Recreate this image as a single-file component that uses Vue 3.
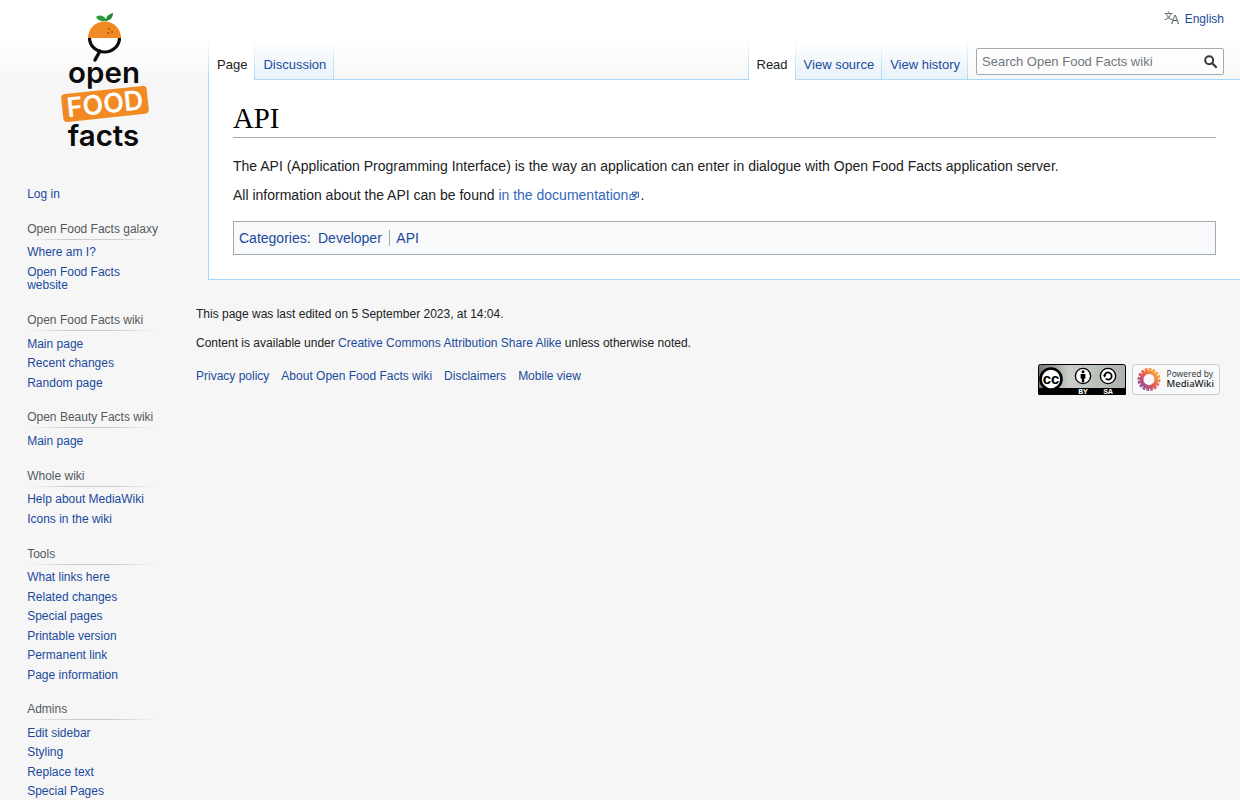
<script setup>
const portals = [
  { title: 'Open Food Facts galaxy', links: ['Where am I?', 'Open Food Facts website'] },
  { title: 'Open Food Facts wiki', links: ['Main page', 'Recent changes', 'Random page'] },
  { title: 'Open Beauty Facts wiki', links: ['Main page'] },
  { title: 'Whole wiki', links: ['Help about MediaWiki', 'Icons in the wiki'] },
  { title: 'Tools', links: ['What links here', 'Related changes', 'Special pages', 'Printable version', 'Permanent link', 'Page information'] },
  { title: 'Admins', links: ['Edit sidebar', 'Styling', 'Replace text', 'Special Pages'] }
]
const footerLinks = ['Privacy policy', 'About Open Food Facts wiki', 'Disclaimers', 'Mobile view']
</script>

<template>
  <div class="page">
    <aside class="sidebar">
      <a class="logo">
        <svg width="130" height="160" viewBox="0 0 130 160">
          <path d="M56 17 C60 14 65 16 67 21 C62 22 58 21 56 17Z" fill="#2f9a3e" />
          <path d="M66 21 C66 16 69 14 73 13 C73 17 71 20 66 21Z" fill="#1f8a35" />
          <path d="M48 38 A16.5 16.5 0 0 1 81 38Z" fill="#f28a24" />
          <circle cx="69" cy="29" r="0.8" fill="#5b3413" />
          <circle cx="72" cy="32" r="0.8" fill="#5b3413" />
          <circle cx="68" cy="33" r="0.8" fill="#5b3413" />
          <path d="M49.5 38 A15 14 0 0 0 79.5 38" fill="#fff" stroke="#0b0b0b" stroke-width="3.2" />
          <path d="M60 51 L55 60" stroke="#0b0b0b" stroke-width="3.4" stroke-linecap="round" />
          <text x="64" y="82.5" class="logo-word" text-anchor="middle">open</text>
          <g transform="rotate(-6 64 104)">
            <rect x="22" y="90" width="86" height="28" rx="4" fill="#f28a24" />
            <text x="65" y="113.5" class="logo-food" text-anchor="middle">FOOD</text>
          </g>
          <text x="63.5" y="146" class="logo-word" text-anchor="middle">facts</text>
        </svg>
      </a>
      <nav class="portal first">
        <ul><li><a>Log in</a></li></ul>
      </nav>
      <nav v-for="p in portals" :key="p.title" class="portal">
        <h3>{{ p.title }}</h3>
        <ul>
          <li v-for="l in p.links" :key="l"><a>{{ l }}</a></li>
        </ul>
      </nav>
    </aside>

    <div class="main">
      <header class="head">
        <div class="personal">
          <svg class="uls" width="18" height="16" viewBox="0 0 18 16">
            <text x="0" y="9" class="uls-a">文</text>
            <text x="7" y="14" class="uls-b">A</text>
          </svg>
          <a>English</a>
        </div>
        <div class="navbar">
          <ul class="tabs">
            <li class="selected"><a>Page</a></li>
            <li><a>Discussion</a></li>
          </ul>
          <div class="nav-right">
            <ul class="tabs">
              <li class="selected"><a>Read</a></li>
              <li><a>View source</a></li>
              <li><a>View history</a></li>
            </ul>
            <div class="search">
              <input type="text" placeholder="Search Open Food Facts wiki" />
              <svg class="search-icon" width="13" height="13" viewBox="0 0 13 13">
                <circle cx="5.2" cy="5.2" r="4" fill="none" stroke="#36383a" stroke-width="2" />
                <path d="M8.2 8.2 L12 12" stroke="#36383a" stroke-width="2.2" stroke-linecap="round" />
              </svg>
            </div>
          </div>
        </div>
      </header>

      <main class="content">
        <h1>API</h1>
        <p>The API (Application Programming Interface) is the way an application can enter in dialogue with Open Food Facts application server.</p>
        <p>All information about the API can be found <a class="external">in the documentation<svg class="ext-icon" width="11" height="10" viewBox="0 0 11 10"><path d="M1 3.5h5v5h-5z M3.5 3.5V1.2h6v5H6" fill="none" stroke="#36b" stroke-width="1" /><path d="M3.5 6 L8 2" stroke="#36b" stroke-width="1.1" /></svg></a>.</p>
        <div class="catlinks">
          <a>Categories</a>:
          <a class="cat">Developer</a><a class="cat sep">API</a>
        </div>
      </main>

      <footer class="footer">
        <p>This page was last edited on 5 September 2023, at 14:04.</p>
        <p>Content is available under <a>Creative Commons Attribution Share Alike</a> unless otherwise noted.</p>
        <div class="footer-bottom">
          <ul class="places">
            <li v-for="l in footerLinks" :key="l"><a>{{ l }}</a></li>
          </ul>
          <div class="badges">
            <svg width="88" height="31" viewBox="0 0 88 31">
              <defs>
                <linearGradient id="ccbg" x1="0" x2="1" y1="0" y2="0">
                  <stop offset="0" stop-color="#6f7470" />
                  <stop offset="0.35" stop-color="#c9cec9" />
                  <stop offset="1" stop-color="#aab2ab" />
                </linearGradient>
              </defs>
              <rect x="0.5" y="0.5" width="87" height="30" rx="2" fill="url(#ccbg)" stroke="#000" />
              <rect x="0" y="24" width="88" height="7" rx="1.5" fill="#000" />
              <circle cx="13" cy="15" r="10.5" fill="#fff" stroke="#000" stroke-width="2.6" />
              <text x="13" y="20" class="cc-text" text-anchor="middle">cc</text>
              <circle cx="45" cy="12" r="7.6" fill="#fff" stroke="#000" stroke-width="1.4" />
              <circle cx="45" cy="7.8" r="1.5" fill="#000" />
              <path d="M42.6 10h4.8v4.4h-1.2v4h-2.4v-4h-1.2z" fill="#000" />
              <circle cx="70" cy="12" r="7.6" fill="#fff" stroke="#000" stroke-width="1.4" />
              <path d="M66.5 12a3.6 3.6 0 1 1 1.2 2.7" fill="none" stroke="#000" stroke-width="1.8" />
              <path d="M64.8 11.2h3.6l-1.8 2.4z" fill="#000" />
              <text x="45" y="30" class="cc-small" text-anchor="middle">BY</text>
              <text x="70" y="30" class="cc-small" text-anchor="middle">SA</text>
            </svg>
            <svg width="88" height="31" viewBox="0 0 88 31">
              <defs>
                <linearGradient id="mwf" x1="1" x2="0" y1="0" y2="1">
                  <stop offset="0" stop-color="#fbb03b" />
                  <stop offset="0.5" stop-color="#ec5a4e" />
                  <stop offset="1" stop-color="#8a4b9f" />
                </linearGradient>
              </defs>
              <rect x="0.5" y="0.5" width="87" height="30" rx="3" fill="#f8f9fa" stroke="#c8ccd1" />
              <circle cx="17" cy="15.5" r="8.5" fill="none" stroke="url(#mwf)" stroke-width="6" stroke-dasharray="2.3 1" />
              <circle cx="17" cy="15.5" r="7.5" fill="none" stroke="url(#mwf)" stroke-width="3.4" />
              <text x="34.5" y="12.5" class="mw-text">Powered by</text>
              <text x="34.5" y="22.5" class="mw-text strong">MediaWiki</text>
            </svg>
          </div>
        </div>
      </footer>
    </div>
  </div>
</template>

<style>
html, body {
  margin: 0;
  background: #f6f6f6;
}
</style>

<style scoped>
.page {
  display: flex;
  height: 800px;
  overflow: hidden;
  font-family: "Liberation Sans", Arial, sans-serif;
  color: #202122;
  background: linear-gradient(#fff 40px, #f6f6f6 80px);
}
a {
  color: #1a4a9c;
}
ul {
  list-style: none;
  margin: 0;
  padding: 0;
}

.sidebar {
  width: 160px;
  flex: none;
  padding-left: 8px;
  margin-right: 8px;
}
.logo {
  display: block;
  height: 160px;
  margin-bottom: 19px;
  margin-left: -8px;
  padding-left: 40px;
}
.logo svg {
  display: block;
}
.logo-word {
  font-family: Inter, sans-serif;
  font-weight: 600;
  font-size: 29.5px;
  fill: #0b0b0b;
}
.logo-food {
  font-family: Inter, sans-serif;
  font-weight: 600;
  font-size: 27px;
  fill: #fff;
}
.portal {
  margin: 0 9.6px 0 11.2px;
  padding: 2.6px 0;
}
.portal h3 {
  margin: 8px 0 0 8px;
  padding: 3px 0;
  font-size: 12px;
  line-height: 16px;
  font-weight: normal;
  color: #54595d;
  background: linear-gradient(to right, rgba(200, 204, 209, 0) 0, #c8ccd1 33%, #c8ccd1 66%, rgba(200, 204, 209, 0) 100%) no-repeat bottom / 100% 1px;
}
.portal ul {
  margin-left: 8px;
  padding-top: 3.6px;
}
.portal li {
  font-size: 12px;
  line-height: 13.5px;
  padding: 3px 0;
  overflow-wrap: break-word;
}

.main {
  flex: 1;
  min-width: 0;
}
.head {
  height: 79px;
  display: flex;
  flex-direction: column;
  justify-content: flex-end;
  margin-left: 32px;
}
.personal {
  height: 40px;
  display: flex;
  justify-content: flex-end;
  align-items: center;
  gap: 3px;
  padding: 0 16px 2px 0;
  box-sizing: border-box;
  font-size: 12px;
}
.uls {
  margin-bottom: 3px;
}
.uls-a {
  font-family: "Noto Sans CJK SC", sans-serif;
  font-size: 9px;
  fill: #54595d;
}
.uls-b {
  font-family: "Liberation Sans", sans-serif;
  font-size: 12px;
  fill: #54595d;
}
.navbar {
  display: flex;
  justify-content: space-between;
  height: 39px;
}
.nav-right {
  display: flex;
}
.tabs {
  display: flex;
  height: 40px;
  position: relative;
  z-index: 1;
  padding-left: 1px;
  background: linear-gradient(to bottom, rgba(167, 215, 249, 0) 0, #a7d7f9 100%) no-repeat left bottom / 1px 100%;
}
.tabs li {
  padding: 0 8px;
  font-size: 13px;
  line-height: 49px;
  position: relative;
  background: linear-gradient(to top, #77c1f6 0, #e8f2f8 1px, #fff 100%);
}
.tabs li::after {
  content: "";
  position: absolute;
  right: 0;
  top: 0;
  bottom: 0;
  width: 1px;
  background: linear-gradient(to bottom, rgba(167, 215, 249, 0) 0, #a7d7f9 100%);
}
.tabs li.selected {
  background: #fff;
}
.tabs li.selected a {
  color: #202122;
}
.search {
  position: relative;
  width: 248px;
  margin: 8px 16px 0 8px;
  height: 27px;
}
.search input {
  display: block;
  width: 100%;
  height: 100%;
  box-sizing: border-box;
  border: 1px solid #a2a9b1;
  border-radius: 2px;
  padding: 0 24px 0 5px;
  font: 13px "Liberation Sans", Arial, sans-serif;
  background: rgba(255, 255, 255, 0.5);
  color: #000;
  outline: none;
}
.search input::placeholder {
  color: #72777d;
  opacity: 1;
}
.search-icon {
  position: absolute;
  right: 7px;
  top: 7px;
}

.content {
  margin-left: 32px;
  border: 1px solid #a7d7f9;
  border-right: 0;
  background: #fff;
  padding: 20px 24px 24px 24px;
  font-size: 14px;
  line-height: 22.4px;
}
.content h1 {
  margin: 0 0 16.5px;
  font-family: "Liberation Serif", "Times New Roman", serif;
  font-weight: normal;
  font-size: 28.8px;
  line-height: 37.4px;
  color: #000;
  border-bottom: 1px solid #a2a9b1;
}
.content p {
  margin: 7px 0;
}
.external {
  color: #36b;
}
.ext-icon {
  margin-left: 1px;
  vertical-align: -1px;
}
.catlinks {
  margin-top: 14px;
  border: 1px solid #a2a9b1;
  background: #f8f9fa;
  padding: 5px;
}
.cat {
  margin-left: 3.5px;
}
.cat.sep {
  margin-left: 7.5px;
  padding-left: 6px;
  border-left: 1px solid #a2a9b1;
}

.footer {
  margin-left: 20px;
  padding: 20px 20px 0 0;
  font-size: 12px;
  line-height: 17px;
}
.footer p {
  margin: 0;
  padding: 6px 0;
}
.footer-bottom {
  display: flex;
  justify-content: space-between;
  align-items: flex-start;
}
.places {
  display: flex;
  gap: 12px;
  padding-top: 10px;
}
.badges {
  display: flex;
  gap: 6px;
  padding-top: 6px;
}
.badges svg {
  display: block;
}
.cc-text {
  font-family: "Liberation Sans", sans-serif;
  font-weight: 700;
  font-size: 15px;
}
.cc-small {
  font-family: "Liberation Mono", monospace;
  font-weight: 700;
  font-size: 8px;
  fill: #fff;
}
.mw-text {
  font-family: "Noto Sans", sans-serif;
  font-size: 8.5px;
  fill: #3a3d40;
}
.mw-text.strong {
  font-size: 9.5px;
  font-weight: 500;
  fill: #202122;
}
</style>
